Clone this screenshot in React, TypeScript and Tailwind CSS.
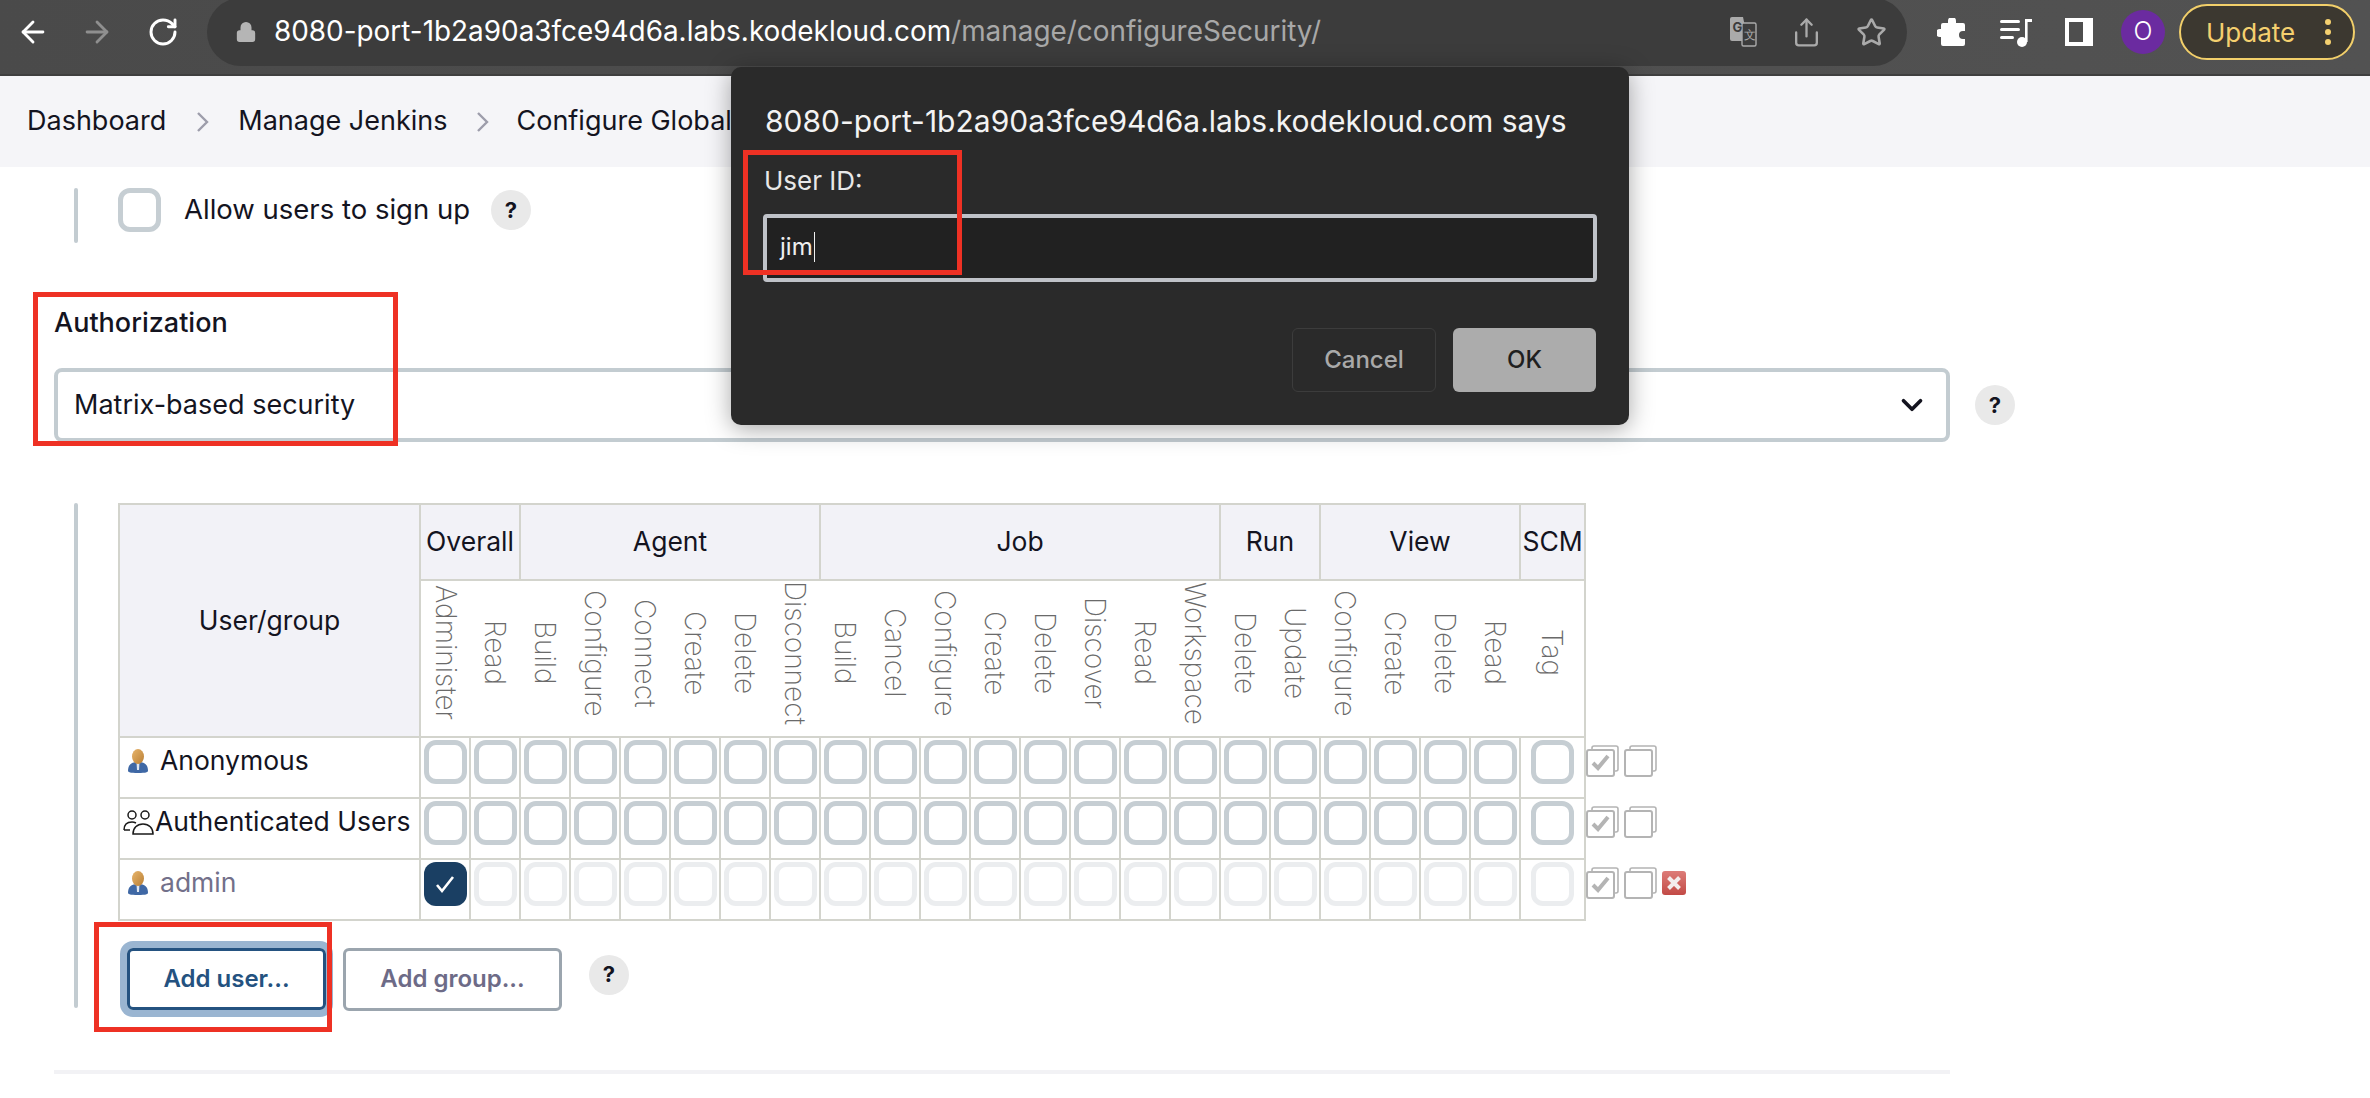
import { ArrowLeft, ArrowRight, RotateCw, Lock, Share, Star, ChevronDown } from "lucide-react";

const groups = [
  { name: "Overall", perms: ["Administer", "Read"] },
  { name: "Agent", perms: ["Build", "Configure", "Connect", "Create", "Delete", "Disconnect"] },
  { name: "Job", perms: ["Build", "Cancel", "Configure", "Create", "Delete", "Discover", "Read", "Workspace"] },
  { name: "Run", perms: ["Delete", "Update"] },
  { name: "View", perms: ["Configure", "Create", "Delete", "Read"] },
  { name: "SCM", perms: ["Tag"] },
];

const allPerms = groups.flatMap((g) => g.perms);

const PersonIcon = () => (
  <svg width="20" height="24" viewBox="0 0 20 24" className="shrink-0">
    <defs>
      <linearGradient id="head" x1="0" y1="0" x2="1" y2="1">
        <stop offset="0" stopColor="#e8b56c" />
        <stop offset="1" stopColor="#b97f35" />
      </linearGradient>
    </defs>
    <path d="M0 22c0-6 3-9 10-9s10 3 10 9c0 1-2 2-10 2S0 23 0 22z" fill="#3f68a5" />
    <path d="M8.6 14h2.8L11 21H9z" fill="#dfe6ef" />
    <ellipse cx="10" cy="7.5" rx="6" ry="7.5" fill="url(#head)" />
  </svg>
);

const GroupIcon = () => (
  <svg width="32" height="26" viewBox="0 0 32 26" fill="none" stroke="#1a1a1a" strokeWidth="1.5" className="shrink-0">
    <circle cx="9" cy="6" r="4" />
    <circle cx="22" cy="6" r="4" />
    <path d="M1 21c0-5 3-8 8-8 2 0 3 .5 4 1" />
    <path d="M1 21h6" />
    <path d="M10 25c0-6 4-10 10-10s10 4 10 10z" />
  </svg>
);

const HelpDot = ({ className = "" }: { className?: string }) => (
  <span className={`flex h-[40px] w-[40px] shrink-0 items-center justify-center rounded-full bg-[#e9e9e9] text-[22px] font-bold text-[#14141f] ${className}`}>?</span>
);

const Crumb = () => (
  <svg width="13" height="22" viewBox="0 0 13 22" fill="none" stroke="#9d9dab" strokeWidth="2.4" className="shrink-0">
    <path d="M2 2l9 9-9 9" />
  </svg>
);

const Box = ({ state = "on" }: { state?: "on" | "off" | "checked" }) => {
  if (state === "checked") {
    return (
      <span className="flex h-[44px] w-[43px] shrink-0 items-center justify-center rounded-[12px] bg-[#1a3f63]">
        <svg width="22" height="20" viewBox="0 0 22 20" fill="none" stroke="#fff" strokeWidth="2.6">
          <path d="M3 11l5 6L19 3" />
        </svg>
      </span>
    );
  }
  return <span className={`block h-[44px] w-[43px] shrink-0 rounded-[12px] border-[5px] ${state === "on" ? "border-[#c6ced3]" : "border-[#ebedef]"}`} />;
};

const StackIcon = ({ checked }: { checked?: boolean }) => (
  <svg width="33" height="32" viewBox="0 0 33 32" fill="none" className="shrink-0">
    <path d="M6 5V3a2 2 0 012-2h22a2 2 0 012 2v21a2 2 0 01-2 2h-2" stroke="#b4b4b4" strokeWidth="1.6" />
    <rect x="1" y="5" width="27" height="26" rx="2" fill="#fff" stroke="#b4b4b4" strokeWidth="2" />
    {checked && <path d="M7 18l5 5 10-12" stroke="#b4b4b4" strokeWidth="4" />}
  </svg>
);

const RowTail = ({ remove }: { remove?: boolean }) => (
  <div className="flex w-[110px] items-center gap-[5px]">
    <StackIcon checked />
    <StackIcon />
    {remove && (
      <span className="flex h-[24px] w-[24px] items-center justify-center rounded-[3px] bg-gradient-to-b from-[#dd7c78] to-[#c24a46]">
        <svg width="14" height="14" viewBox="0 0 14 14" stroke="#f3eeee" strokeWidth="4">
          <path d="M1.5 1.5l11 11M12.5 1.5l-11 11" />
        </svg>
      </span>
    )}
  </div>
);

const rows = [
  { name: "Anonymous", icon: <PersonIcon />, gap: "gap-[12px] pl-[8px]", muted: false },
  { name: "Authenticated Users", icon: <GroupIcon />, gap: "gap-0 pl-[3px]", muted: false },
  { name: "admin", icon: <PersonIcon />, gap: "gap-[12px] pl-[8px]", muted: true },
];

export default function App() {
  return (
    <div className="relative h-[1098px] w-[2370px] overflow-hidden bg-white font-['Inter',sans-serif] text-[#14141f]">
      {/* browser toolbar */}
      <div className="flex h-[76px] items-start border-b-[2px] border-[#3f3f3f] bg-gradient-to-r from-[#4a4a4a] to-[#525252]">
        <div className="flex h-[64px] w-[207px] items-center gap-[30px] pl-[16px]">
          <ArrowLeft size={34} color="#ffffff" strokeWidth={2} />
          <ArrowRight size={34} color="#8f8f8f" strokeWidth={2} />
          <RotateCw size={32} color="#ffffff" strokeWidth={2.2} className="ml-[3px]" />
        </div>
        <div className="-mt-[2px] flex h-[68px] w-[1700px] items-center rounded-[34px] bg-[#3c3c3c] pl-[28px] pr-[20px]">
          <Lock size={22} color="#b5b5b5" fill="#b5b5b5" className="shrink-0" />
          <span className="ml-[17px] whitespace-nowrap text-[27.9px] text-white">
            8080-port-1b2a90a3fce94d6a.labs.kodekloud.com<span className="text-[#a8a8a8]">/manage/configureSecurity/</span>
          </span>
          <div className="ml-auto flex items-center gap-[34px]">
            <svg width="28" height="30" viewBox="0 0 28 30">
              <path d="M1 2a2 2 0 012-2h11l5 24H3a2 2 0 01-2-2z" fill="#aaaaaa" />
              <rect x="13" y="6" width="14" height="23" rx="1.5" fill="#3c3c3c" stroke="#aaaaaa" strokeWidth="1.4" />
              <text x="3.5" y="15" fontSize="13" fontWeight="700" fill="#3c3c3c">G</text>
              <text x="15" y="22" fontSize="12" fill="#aaaaaa">文</text>
            </svg>
            <Share size={31} color="#aaaaaa" strokeWidth={1.8} />
            <Star size={31} color="#aaaaaa" strokeWidth={2} />
          </div>
        </div>
        <div className="flex h-[64px] flex-1 items-center">
          <div className="ml-[30px] flex items-center gap-[33px]">
            <svg width="30" height="28" viewBox="0 0 30 28" fill="#ffffff">
              <path d="M11 3a4 4 0 018 0v2h7a2 2 0 012 2v6h-2a4 4 0 000 8h2v5a2 2 0 01-2 2H6a2 2 0 01-2-2v-7H3a4 4 0 010-8h1V7a2 2 0 012-2h5z" />
            </svg>
            <svg width="32" height="30" viewBox="0 0 32 30" fill="#ffffff">
              <rect x="0" y="3" width="20" height="3" rx="1.5" />
              <rect x="0" y="11" width="20" height="3" rx="1.5" />
              <rect x="0" y="19" width="14" height="3" rx="1.5" />
              <circle cx="22" cy="25" r="5" />
              <rect x="25" y="2" width="2.6" height="23" />
              <rect x="25" y="2" width="7" height="3" />
            </svg>
            <svg width="28" height="28" viewBox="0 0 28 28">
              <rect width="28" height="28" fill="#ffffff" />
              <rect x="4" y="4" width="14" height="20" fill="#4e4e4e" />
            </svg>
          </div>
          <span className="ml-[28px] flex h-[44px] w-[44px] items-center justify-center rounded-full bg-[#6b2ba0] text-[25px] font-light text-white">O</span>
          <div className="ml-[14px] flex h-[56px] w-[176px] items-center rounded-full border-[2px] border-[#f2cf6a] bg-[#3c3830] pl-[25px] text-[26px] text-[#f5d06f]">
            Update
            <span className="ml-[30px] flex flex-col gap-[4px]">
              <span className="h-[6px] w-[6px] rounded-full bg-[#f5d06f]" />
              <span className="h-[6px] w-[6px] rounded-full bg-[#f5d06f]" />
              <span className="h-[6px] w-[6px] rounded-full bg-[#f5d06f]" />
            </span>
          </div>
        </div>
      </div>

      {/* breadcrumb */}
      <div className="flex h-[91px] items-center bg-[#f5f5f8] pl-[27px] text-[27px]">
        <span>Dashboard</span>
        <span className="ml-[30px] mr-[29px] flex"><Crumb /></span>
        <span>Manage Jenkins</span>
        <span className="ml-[28px] mr-[28px] flex"><Crumb /></span>
        <span>Configure Global</span>
      </div>

      {/* allow sign up */}
      <div className="ml-[74px] mt-[21px] flex h-[55px] items-start">
        <span className="h-full w-[4px] rounded-[2px] bg-[#c3ccd1]" />
        <span className="ml-[40px]"><Box /></span>
        <span className="ml-[23px] flex h-[44px] items-center text-[27.5px]">Allow users to sign up</span>
        <HelpDot className="ml-[21px] mt-[2px]" />
      </div>

      {/* authorization */}
      <div className="ml-[54px] mt-[62px] w-[1896px]">
        <div className="h-[38px] text-[27px] font-medium leading-[36px]">Authorization</div>
        <div className="relative mt-[25px] flex h-[74px] items-center rounded-[8px] border-[4px] border-[#c3ccd1] pl-[16px] pr-[17px] text-[27px]">
          Matrix-based security
          <ChevronDown size={34} color="#14141f" strokeWidth={2.6} className="ml-auto" />
          <HelpDot className="absolute -right-[69px] top-[13px]" />
        </div>
      </div>

      {/* matrix */}
      <div className="ml-[74px] mt-[61px] flex">
        <span className="h-[505px] w-[4px] rounded-[2px] bg-[#c3ccd1]" />
        <div className="ml-[40px]">
          <div className="flex items-start">
            <table className="w-[1466px] table-fixed border-collapse text-[26.5px]">
              <colgroup>
                <col className="w-[301px]" />
                {allPerms.map((p, i) => (
                  <col key={i} className={i === allPerms.length - 1 ? "w-[65px]" : "w-[50px]"} />
                ))}
              </colgroup>
              <thead>
                <tr className="h-[76px]">
                  <th rowSpan={2} className="border-2 border-[#d3d4cd] bg-[#f2f2f7] font-normal">User/group</th>
                  {groups.map((g) => (
                    <th key={g.name} colSpan={g.perms.length} className="border-2 border-[#d3d4cd] bg-[#f2f2f7] px-0 font-normal">{g.name}</th>
                  ))}
                </tr>
                <tr className="h-[155px]">
                  {allPerms.map((p, i) => (
                    <th key={i} className={`p-0 font-extralight text-[#6a6a6a] ${i === allPerms.length - 1 ? "border-r-2 border-[#d3d4cd]" : ""}`}>
                      <span className="inline-block text-[28px] leading-[30px] [writing-mode:vertical-rl]">{p}</span>
                    </th>
                  ))}
                </tr>
              </thead>
              <tbody>
                {rows.map((r) => (
                  <tr key={r.name} className="h-[61px]">
                    <td className="border-2 border-[#d3d4cd] p-0 align-top">
                      <div className={`flex h-[47px] items-center ${r.gap} ${r.muted ? "text-[#72708a]" : ""}`}>
                        {r.icon}
                        <span className="whitespace-nowrap">{r.name}</span>
                      </div>
                    </td>
                    {allPerms.map((p, i) => (
                      <td key={i} className="border-2 border-[#d3d4cd] p-0 pt-[2px] align-top">
                        <div className="flex justify-center">
                          {r.muted ? <Box state={i === 0 ? "checked" : "off"} /> : <Box />}
                        </div>
                      </td>
                    ))}
                  </tr>
                ))}
              </tbody>
            </table>
            <div className="mt-[231px] flex flex-col">
              {rows.map((r) => (
                <div key={r.name} className="flex h-[61px] items-start pt-[11px]">
                  <RowTail remove={r.muted} />
                </div>
              ))}
            </div>
          </div>
          <div className="mt-[27px] flex items-start">
            <button className="ml-[9px] h-[62px] w-[199px] rounded-[6px] border-[3px] border-[#245280] text-[24px] font-semibold text-[#245280] shadow-[0_0_0_7px_#9ab5d1]">Add user...</button>
            <button className="ml-[17px] h-[63px] w-[219px] rounded-[6px] border-[3px] border-[#9ba5ae] text-[24px] font-semibold text-[#6d6b87]">Add group...</button>
            <HelpDot className="ml-[27px] mt-[7px]" />
          </div>
        </div>
      </div>

      <div className="ml-[54px] mt-[59px] h-[4px] w-[1896px] bg-[#f2f2f5]" />

      {/* annotation boxes */}
      <div className="absolute left-[33px] top-[292px] h-[154px] w-[365px] border-[5px] border-[#ee3124]" />
      <div className="absolute left-[94px] top-[922px] h-[110px] w-[238px] border-[5px] border-[#ee3124]" />

      {/* prompt dialog */}
      <div className="absolute left-[731px] top-[67px] h-[358px] w-[898px] rounded-[10px] bg-[#2a2a2a] px-[32px] shadow-[0_4px_24px_rgba(0,0,0,0.35)]">
        <div className="mt-[36px] h-[36px] whitespace-nowrap pl-[2px] text-[30px] leading-[36px] text-[#f3f3f3]">8080-port-1b2a90a3fce94d6a.labs.kodekloud.com says</div>
        <div className="mt-[26px] pl-[1px] text-[26px] leading-[32px] text-[#e8e8e8]">User ID:</div>
        <div className="mt-[17px] flex h-[68px] items-center rounded-[4px] border-[4px] border-[#bfc2c8] bg-[#212121] pl-[13px] text-[24px] text-[#efefef]">
          <span className="-mt-[2px] flex items-center">jim<span className="ml-[1px] h-[30px] w-[1.5px] bg-[#efefef]" /></span>
        </div>
        <div className="mt-[46px] flex justify-end gap-[17px] pr-[1px]">
          <button className="h-[64px] w-[144px] rounded-[6px] border border-[#3c3c3c] text-[24px] font-medium text-[#a9a9a9]">Cancel</button>
          <button className="h-[64px] w-[143px] rounded-[6px] bg-[#acacac] text-[24px] font-medium text-[#1f1f1f]">OK</button>
        </div>
      </div>
      <div className="absolute left-[743px] top-[150px] h-[125px] w-[219px] border-[5px] border-[#ee3124]" />
    </div>
  );
}
